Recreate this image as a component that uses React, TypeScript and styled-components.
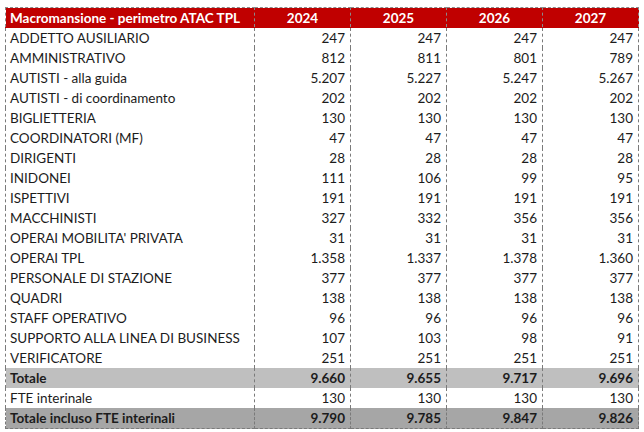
import React from "react";
import styled, { createGlobalStyle } from "styled-components";

const GlobalStyle = createGlobalStyle`
  html, body {
    margin: 0;
    padding: 0;
    background: #ffffff;
  }
`;

const Page = styled.div`
  padding: 7px 0 0 5px;
  font-family: Lato, "Liberation Sans", sans-serif;
  font-size: 13.5px;
  color: #1c1c1c;
`;

const Table = styled.table`
  border-collapse: collapse;
  table-layout: fixed;
  width: 634px;
`;

const Col = styled.col<{ $w: number }>`
  width: ${(p) => p.$w}px;
`;

const HeadCell = styled.th<{ $first?: boolean }>`
  background: #c00000;
  color: #ffffff;
  font-weight: 700;
  height: 19px;
  padding: 0 4px;
  text-align: ${(p) => (p.$first ? "left" : "center")};
  border: 1px dashed #8a8a8a;
  border-bottom: 1px solid #c00000;
`;

const Row = styled.tr<{ $tone?: "light" | "dark" }>`
  background: ${(p) =>
    p.$tone === "light" ? "#bfbfbf" : p.$tone === "dark" ? "#a6a6a6" : "#ffffff"};
  font-weight: ${(p) => (p.$tone ? 700 : 400)};
`;

const Cell = styled.td<{ $first?: boolean; $last?: boolean }>`
  height: 20px;
  padding: 0 5px 0 4px;
  white-space: nowrap;
  text-align: ${(p) => (p.$first ? "left" : "right")};
  border-left: 1px dashed #7a7a7a;
  border-right: 1px dashed #7a7a7a;
  ${(p) => (p.$last ? "border-bottom: 1px dashed #7a7a7a;" : "")}
`;

type Line = { name: string; v: string[]; tone?: "light" | "dark" };

const rows: Line[] = [
  { name: "ADDETTO AUSILIARIO", v: ["247", "247", "247", "247"] },
  { name: "AMMINISTRATIVO", v: ["812", "811", "801", "789"] },
  { name: "AUTISTI - alla guida", v: ["5.207", "5.227", "5.247", "5.267"] },
  { name: "AUTISTI - di coordinamento", v: ["202", "202", "202", "202"] },
  { name: "BIGLIETTERIA", v: ["130", "130", "130", "130"] },
  { name: "COORDINATORI (MF)", v: ["47", "47", "47", "47"] },
  { name: "DIRIGENTI", v: ["28", "28", "28", "28"] },
  { name: "INIDONEI", v: ["111", "106", "99", "95"] },
  { name: "ISPETTIVI", v: ["191", "191", "191", "191"] },
  { name: "MACCHINISTI", v: ["327", "332", "356", "356"] },
  { name: "OPERAI MOBILITA' PRIVATA", v: ["31", "31", "31", "31"] },
  { name: "OPERAI TPL", v: ["1.358", "1.337", "1.378", "1.360"] },
  { name: "PERSONALE DI STAZIONE", v: ["377", "377", "377", "377"] },
  { name: "QUADRI", v: ["138", "138", "138", "138"] },
  { name: "STAFF OPERATIVO", v: ["96", "96", "96", "96"] },
  { name: "SUPPORTO ALLA LINEA DI BUSINESS", v: ["107", "103", "98", "91"] },
  { name: "VERIFICATORE", v: ["251", "251", "251", "251"] },
  { name: "Totale", v: ["9.660", "9.655", "9.717", "9.696"], tone: "light" },
  { name: "FTE interinale", v: ["130", "130", "130", "130"] },
  { name: "Totale incluso FTE interinali", v: ["9.790", "9.785", "9.847", "9.826"], tone: "dark" },
];

const years = ["2024", "2025", "2026", "2027"];

const App = () => {
  return (
    <Page>
      <GlobalStyle />
      <Table>
        <colgroup>
          <Col $w={249} />
          {years.map((y) => (
            <Col key={y} $w={96} />
          ))}
        </colgroup>
        <thead>
          <tr>
            <HeadCell $first>Macromansione - perimetro ATAC TPL</HeadCell>
            {years.map((y) => (
              <HeadCell key={y}>{y}</HeadCell>
            ))}
          </tr>
        </thead>
        <tbody>
          {rows.map((r, i) => (
            <Row key={r.name} $tone={r.tone}>
              <Cell $first $last={i === rows.length - 1}>
                {r.name}
              </Cell>
              {r.v.map((n, j) => (
                <Cell key={j} $last={i === rows.length - 1}>
                  {n}
                </Cell>
              ))}
            </Row>
          ))}
        </tbody>
      </Table>
    </Page>
  );
};

export default App;
